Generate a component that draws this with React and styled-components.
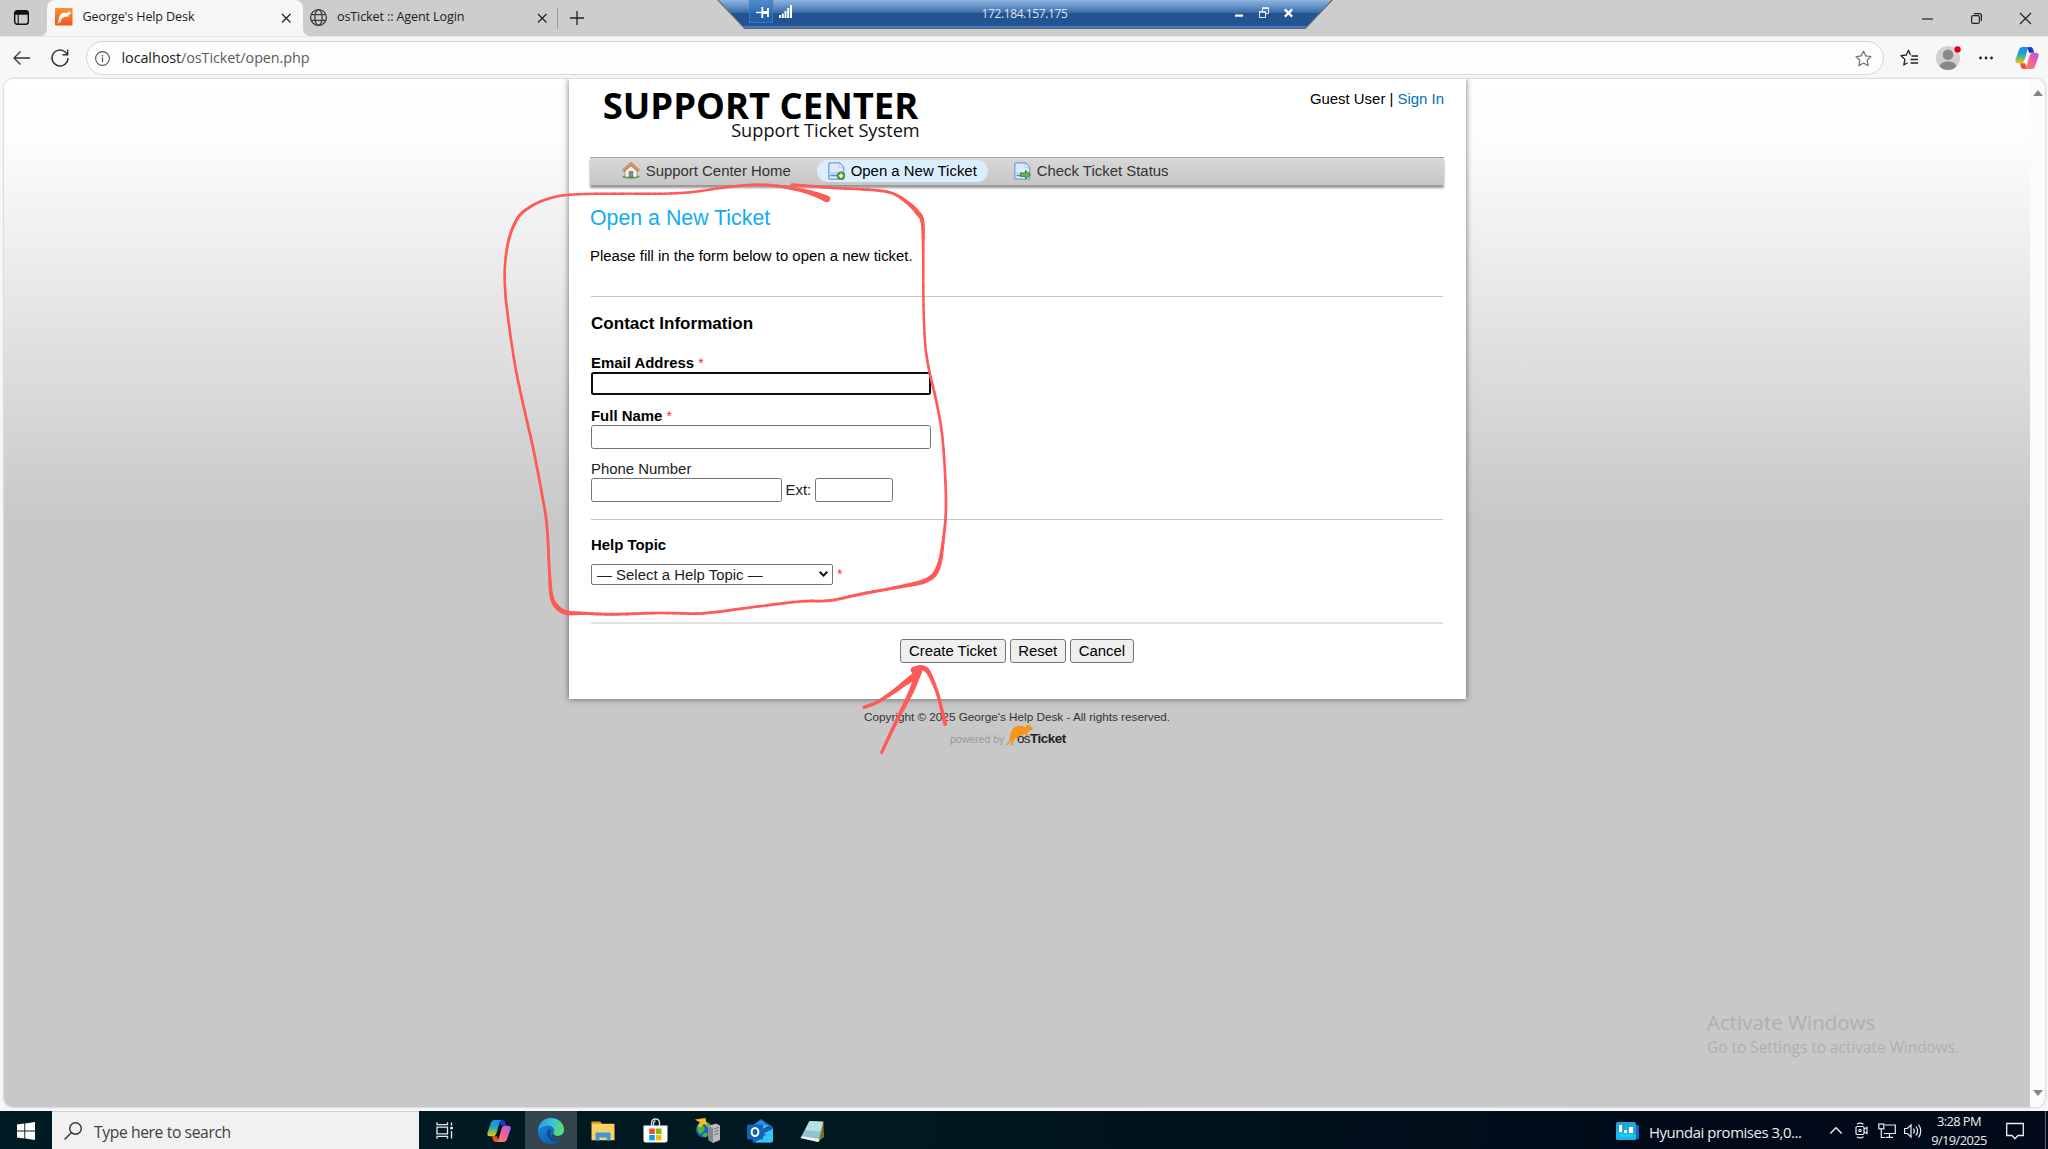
import React from "react";
import styled, { createGlobalStyle } from "styled-components";

const Global = createGlobalStyle`
  * { box-sizing: border-box; }
  html, body { margin: 0; padding: 0; }
  body { width: 2048px; height: 1149px; overflow: hidden; background: #f7f7f7; }
`;

const ui = `"Open Sans", "Noto Sans", sans-serif`;
const arial = `"Liberation Sans", Arial, sans-serif`;

const Screen = styled.div`
  position: relative;
  width: 2048px;
  height: 1149px;
  display: flex;
  flex-direction: column;
  overflow: hidden;
  background: #f7f7f7;
  font-family: ${ui};
`;

const Icon = styled.svg`
  display: block;
  flex: none;
  overflow: visible;
  width: ${(p) => p.$w}px;
  height: ${(p) => p.$h || p.$w}px;
  margin-left: ${(p) => p.$ml || 0}px;
  margin-top: ${(p) => p.$mt || 0}px;
`;

/* ---------- browser chrome ---------- */
const TabStrip = styled.div`
  display: flex;
  height: 36px;
  flex: none;
  color: #1b1b1b;
`;
const StripStart = styled.div`
  width: 47px;
  background: #cdcdcd;
  border-bottom-right-radius: 7px;
  padding: 10px 0 0 14px;
`;
const ActiveTabSlot = styled.div`
  width: 256px;
  background: linear-gradient(#cdcdcd 50%, #f7f7f7 50%);
`;
const ActiveTab = styled.div`
  height: 36px;
  display: flex;
  align-items: center;
  padding-left: 7.5px;
  background: #f7f7f7;
  border-radius: 8px 8px 0 0;
`;
const StripRest = styled.div`
  flex: 1;
  display: flex;
  align-items: center;
  background: #cdcdcd;
  border-bottom-left-radius: 7px;
  padding: 0 17px 0 6.5px;
`;
const TabTitle = styled.div`
  width: ${(p) => p.$w}px;
  margin-left: 10.5px;
  font-size: 12.6px;
  line-height: 18px;
  margin-top: -1.5px;
  letter-spacing: -0.13px;
  white-space: nowrap;
`;
const Separator = styled.div`
  width: 1px;
  height: 21px;
  margin-left: 10.5px;
  background: #999;
`;
const Spacer = styled.div`
  flex: 1;
`;

const Toolbar = styled.div`
  display: flex;
  align-items: center;
  flex: none;
  height: 43px;
  padding-left: 12.5px;
  border-top: 1px solid #e6e6e6;
`;
const AddressBar = styled.div`
  display: flex;
  align-items: center;
  width: 1798px;
  height: 34px;
  margin-left: 17px;
  padding: 0 11px 0 8.5px;
  background: #fdfdfd;
  border: 1px solid #d6d6d6;
  border-radius: 17px;
`;
const Url = styled.div`
  flex: 1;
  margin-left: 11.5px;
  font-size: 14.4px;
  line-height: 20px;
  letter-spacing: -0.08px;
  color: #5c5c5c;
  b { font-weight: 400; color: #1b1b1b; }
`;

const Viewport = styled.div`
  display: flex;
  flex: none;
  height: 1028px;
  margin: 0 3px 0 4px;
  border-radius: 9px;
  overflow: hidden;
  box-shadow: 0 0 2px 1px rgba(0, 0, 0, 0.13);
`;
const Scrollbar = styled.div`
  display: flex;
  flex-direction: column;
  justify-content: space-between;
  align-items: center;
  width: 15px;
  padding: 11px 0;
  background: #fbfbfb;
`;

/* ---------- page ---------- */
const Page = styled.div`
  flex: 1;
  display: flex;
  flex-direction: column;
  align-items: center;
  background: linear-gradient(#ffffff 0px, #fdfdfd 60px, #c8c8c8 440px);
  font-family: ${arial};
  font-size: 14.93px;
  color: #000;
`;
const Container = styled.main`
  width: 897px;
  height: 620.3px;
  padding: 0 21.5px;
  background: #fff;
  box-shadow: 0 0 6px rgba(0, 0, 0, 0.55);
`;
const Header = styled.header`
  display: flex;
  justify-content: space-between;
  height: 78px;
`;
const Logo = styled.div`
  width: 329.7px;
  padding: 11px 0 0 12.8px;
  font-family: ${ui};
  white-space: nowrap;
`;
const LogoTitle = styled.div`
  font-size: 36.4px;
  font-weight: 700;
  line-height: 30px;
`;
const LogoSubtitle = styled.div`
  margin-top: 0.8px;
  text-align: right;
  font-size: 18.2px;
  line-height: 19px;
  color: #111;
`;
const UserLinks = styled.div`
  padding-top: 10px;
  line-height: 20px;
  a { color: #0072bc; text-decoration: none; }
`;
const Nav = styled.nav`
  display: flex;
  align-items: flex-start;
  height: 28px;
  padding: 2px 0 0 20.5px;
  border-top: 1px solid #a3a3a3;
  background: linear-gradient(#d8d8d8, #c6c6c6);
  box-shadow: 0 3px 2px rgba(0, 0, 0, 0.4);
`;
const NavItem = styled.div`
  display: flex;
  align-items: center;
  height: 21.5px;
  margin-right: 14.5px;
  padding: 0 11.2px;
  border-radius: 11px;
  line-height: 21px;
  white-space: nowrap;
  gap: 6px;
  color: ${(p) => (p.$active ? "#000" : "#333")};
  background: ${(p) => (p.$active ? "#dbeefe" : "transparent")};
`;
const Heading = styled.h1`
  margin: 19px 0 0;
  font-size: 21.33px;
  font-weight: 400;
  line-height: 28px;
  color: #10acf0;
`;
const Intro = styled.p`
  margin: 13.5px 0 0;
  line-height: 20px;
`;
const Rule = styled.div`
  height: ${(p) => (p.$soft ? 2 : 1)}px;
  margin: ${(p) => p.$top}px 1px 0;
  background: ${(p) => (p.$soft ? "#e1e1e1" : "#c6c6c6")};
`;
const SectionTitle = styled.h3`
  margin: 15.7px 1px 0;
  font-size: 17.07px;
  line-height: 22px;
`;
const Label = styled.label`
  display: block;
  height: 20px;
  margin: ${(p) => p.$top}px 0 0 1px;
  line-height: 21px;
  font-weight: ${(p) => (p.$required ? 700 : 400)};
  color: ${(p) => (p.$required ? "#000" : "#222")};
`;
const Star = styled.span`
  color: #ff2a2a;
  font-weight: 400;
  font-size: 14px;
`;
const Row = styled.div`
  display: flex;
  align-items: center;
  margin-top: ${(p) => p.$top || 0}px;
  margin-left: 1px;
  color: #222;
  white-space: nowrap;
`;
const Field = styled.div`
  width: ${(p) => p.$w}px;
  height: 23.5px;
  border: ${(p) => (p.$focus ? "2px solid #101010" : "1px solid #767676")};
  border-radius: 2.5px;
  background: #fff;
`;
const Ext = styled.span`
  width: 33.5px;
  padding-left: 4px;
  margin-top: -1px;
`;
const SelectBox = styled.div`
  display: flex;
  align-items: center;
  justify-content: space-between;
  width: 242px;
  height: 21px;
  margin-right: 4px;
  padding: 0 4px 0 5px;
  border: 1px solid #767676;
  border-radius: 2px;
`;
const Actions = styled.div`
  display: flex;
  justify-content: center;
  gap: 4.3px;
  margin-top: 15.4px;
`;
const Button = styled.div`
  width: ${(p) => p.$w}px;
  height: 23.5px;
  border: 1px solid #767676;
  border-radius: 3px;
  background: #efefef;
  text-align: center;
  line-height: 22px;
`;
const Copyright = styled.div`
  margin-top: 9.5px;
  font-size: 11.73px;
  line-height: 16px;
  color: #333;
`;
const Powered = styled.div`
  display: flex;
  align-items: flex-end;
  width: 117px;
  height: 22px;
  margin-top: -0.5px;
  margin-right: 17px;
  color: #999;
  font-size: 10.5px;
  line-height: 14px;
  white-space: nowrap;
`;
const PoweredText = styled.div`
  width: 55px;
`;
const Brand = styled.div`
  margin-left: -16px;
  font-size: 13.4px;
  line-height: 14px;
  letter-spacing: -0.6px;
  color: #222;
  z-index: 1;
  b { letter-spacing: -0.45px; }
`;

/* ---------- overlays ---------- */
const RemoteBar = styled.div`
  position: absolute;
  top: 0;
  left: 717px;
  width: 616px;
  height: 29px;
  background: #5d6670;
  clip-path: polygon(0 0, 100% 0, calc(100% - 27.5px) 100%, 27.5px 100%);
`;
const RemoteFace = styled.div`
  position: relative;
  display: flex;
  align-items: center;
  height: 28px;
  padding: 0 40px 2px 32px;
  clip-path: polygon(1.5px 0, calc(100% - 1.5px) 0, calc(100% - 28px) 100%, 28px 100%);
  background: linear-gradient(#8fb3dc 0, #5f8fc6 7px, #3e6ba5 12.5px, #235390 13px, #235390 26px, #4a7bb8 26px, #4a7bb8 28px);
`;
const PinBox = styled.div`
  display: flex;
  align-items: center;
  justify-content: center;
  width: 24px;
  height: 23px;
  margin-top: -3px;
  padding: 3px 0 0 2px;
  background: rgba(37, 110, 190, 0.55);
  border: 1px solid #2f7fcb;
  border-top: 0;
`;
const Address = styled.div`
  flex: 1;
  padding: 2px 0 0 22px;
  text-align: center;
  font-size: 12px;
  line-height: 18px;
  letter-spacing: -0.4px;
  color: #dbe6f3;
`;
const Watermark = styled.div`
  position: absolute;
  left: 1707px;
  top: 1008px;
  color: #afafaf;
  font-size: 15.4px;
  line-height: 24px;
  white-space: nowrap;
  div:first-child { font-size: 20.5px; line-height: 28px; }
`;
const Ink = styled.svg`
  position: absolute;
  left: 0;
  top: 0;
  width: 2048px;
  height: 1149px;
  pointer-events: none;
`;

/* ---------- taskbar ---------- */
const Taskbar = styled.div`
  display: flex;
  height: 38.5px;
  margin-top: 3.5px;
  background: linear-gradient(90deg, #001b24 0, #001820 45%, #000a18 80%);
  color: #eee;
`;
const Slot = styled.div`
  display: flex;
  align-items: center;
  justify-content: center;
  width: ${(p) => p.$w || 52.2}px;
  background: ${(p) => (p.$active ? "#33464f" : "transparent")};
  padding-top: 2px;
`;
const Search = styled.div`
  display: flex;
  align-items: center;
  width: 367px;
  padding-left: 12px;
  background: #f1f1f1;
  border-top: 1px solid #cfd2d3;
  color: #3f3f3f;
  font-size: 15.7px;
  letter-spacing: -0.4px;
`;
const SearchText = styled.span`
  margin-left: 12px;
  padding-top: 4px;
`;
const News = styled.div`
  width: 180px;
  margin-left: 10px;
  font-size: 14.9px;
  line-height: 38px;
  padding-top: 2px;
  letter-spacing: -0.43px;
  white-space: nowrap;
`;
const Clock = styled.div`
  width: 64px;
  padding-top: 1.3px;
  margin-left: 5px;
  text-align: center;
  font-size: 12.9px;
  line-height: 19.6px;
  letter-spacing: -0.6px;
`;
const ShowDesktop = styled.div`
  width: 3px;
  margin-left: 21px;
  border-left: 1px solid #5b6570;
`;

const Close = ({ ml, size = 8.5, color = "#222" }) => (
  <Icon $w={size} $ml={ml} viewBox="0 0 9 9" fill="none" stroke={color} strokeWidth="1.3">
    <path d="M0 0L9 9M9 0L0 9" />
  </Icon>
);

const Copilot = ({ id, w, ml }) => (
  <Icon $w={w} $h={w * 0.92} $ml={ml} viewBox="0 0 24 22">
    <defs>
      <linearGradient id={id + "a"} x1="0" y1="0" x2="0" y2="1">
        <stop offset="0" stopColor="#1c8cf0" />
        <stop offset=".45" stopColor="#20a5c8" />
        <stop offset=".75" stopColor="#8bc04a" />
        <stop offset="1" stopColor="#f4c20d" />
      </linearGradient>
      <linearGradient id={id + "b"} x1="1" y1="0" x2="0" y2="1">
        <stop offset="0" stopColor="#b05cf0" />
        <stop offset=".5" stopColor="#f0609a" />
        <stop offset="1" stopColor="#ff8a4c" />
      </linearGradient>
    </defs>
    <path d="M12 0h3.6c1.500 0 2.200 1 2.600 2.500l.9 3.200h-5z" fill="#1540c0" />
    <path d="M12 22H8.400c-1.500 0-2.200-1-2.600-2.500L5 16.200h5z" fill="#ee4a34" />
    <path d="M15 0H7.500C5.300 0 4.400 1.300 3.700 3.500L.8 11.800C-.3 15 .8 16.300 3 16.300h3c2 0 2.900-1.300 3.600-3.500l2.600-9C12.900 1.500 13.400.2 15 0z" fill={`url(#${id}a)`} />
    <path d="M9 22h7.500c2.200 0 3.100-1.300 3.800-3.500l2.900-8.300C24.300 7 23.200 5.700 21 5.700h-3c-2 0-2.900 1.300-3.600 3.500l-2.600 9C11.100 20.500 10.600 21.800 9 22z" fill={`url(#${id}b)`} />
  </Icon>
);

const DocIcon = ({ children }) => (
  <Icon $w="17" $h="18" viewBox="0 0 17 18">
    <path d="M2 .8h9.500L15.600 5v11q0 1.200-1.200 1.200H2Q.8 17.200.8 16V2Q.8.800 2 .8z" fill="#dceafa" stroke="#6d9fdc" strokeWidth="1.300" />
    <path d="M11.200 1v4.200h4.300z" fill="#fff" stroke="#8fb5e6" strokeWidth=".7" />
    <path d="M2 10h13v3H2z" fill="#b9d6f5" />
    <path d="M2.500 13.600h8" stroke="#3f8fe8" strokeWidth="1.200" />
    {children}
  </Icon>
);

/* Freehand marker: each point is x, y, pen width. */
const loop = [
  [827, 199, 6.5], [816, 194.500, 5], [800, 190, 3.600], [777, 186, 2.600], [753, 184.700, 2.400], [723, 187.700, 2.200],
  [690, 192.300, 2.200], [660, 193.700, 2.200], [623, 193.700, 2.200], [570, 194.700, 2.300], [543, 200.500, 2.400],
  [523, 212, 2.700], [514, 225, 2.700], [508, 243, 2.500], [505, 265, 2.300], [505, 287, 2.300], [507.300, 312, 2.400],
  [515, 365, 2.400], [524, 408, 2.500], [533.500, 450, 2.500], [542.500, 497, 2.500], [547, 527, 2.500], [549.500, 573, 2.700],
  [551.500, 596, 3.500], [557, 607, 4.500], [567, 612.700, 4.500], [585, 613.300, 3], [612, 614.300, 2.700], [660, 613, 2.500],
  [703, 613.300, 2.500], [750, 607.500, 2.500], [800, 601.500, 2.500], [830, 600.500, 2.600], [860, 594.300, 2.800],
  [900, 586.700, 3], [926, 580.500, 4.500], [938, 568, 4.500], [943.700, 537, 2.700], [946, 500, 2.400], [942.700, 440, 2.400],
  [936.700, 403, 2.400], [929.500, 372, 2.400], [925.300, 345, 2.300], [923.500, 305, 2.300], [923.200, 250, 2.400],
  [922.500, 222, 3.500], [917, 212, 4.500], [908, 203, 3.500], [893, 193.500, 2.600], [873, 190, 2.500], [840, 188.300, 2.400],
  [815, 186.500, 2.600], [792, 184.700, 2.800],
];
const arrowHead = [
  [864, 707.300, 3], [877, 702.300, 3], [893, 692, 3.800], [905, 683, 5], [916, 675, 7], [918, 670, 7], [913.500, 670, 5],
  [920, 667.700, 4.500], [926, 669.500, 4.500], [930.500, 676, 4], [937, 692, 3], [941, 707, 3], [945.300, 724, 3.800],
];
const arrowShaft = [[918, 674, 6], [911, 692, 5], [898, 718, 3.500], [881.700, 752.300, 3]];

function strokeSegments(points, steps = 6) {
  const out = [];
  let prev = points[0];
  for (let i = 0; i < points.length - 1; i++) {
    const a = points[Math.max(i - 1, 0)];
    const b = points[i];
    const c = points[i + 1];
    const d = points[Math.min(i + 2, points.length - 1)];
    for (let s = 1; s <= steps; s++) {
      const t = s / steps;
      const at = (k) =>
        0.5 * (2 * b[k] + (c[k] - a[k]) * t + (2 * a[k] - 5 * b[k] + 4 * c[k] - d[k]) * t * t + (3 * b[k] - a[k] - 3 * c[k] + d[k]) * t * t * t);
      const next = [at(0), at(1), b[2] + (c[2] - b[2]) * t];
      out.push([prev, next]);
      prev = next;
    }
  }
  return out;
}

const Marker = ({ points }) =>
  strokeSegments(points).map(([p, q], i) => (
    <line key={i} x1={p[0]} y1={p[1]} x2={q[0]} y2={q[1]} strokeWidth={q[2] + 0.2} />
  ));

const Kangaroo = () => (
  <Icon $w="28" $h="22" viewBox="0 0 84 66">
    <path d="M2 62C11 62 14 54 17 42" fill="none" stroke="#f7941d" strokeWidth="4" />
    <path
      d="M14 46C16 26 22 9 38 6 48 4 56 8 62 9 65 8 66 6 65 1L70 4 74 0 76 6C79 8 83 12 84 15 83 19 76 19 72 20 70 24 68 27 66 28L72 37 68 39 60 30C56 32 52 34 46 36 40 37 36 41 31 44 27 47 25 51 24 57L27 64 18 64 19 50z"
      fill="#f7941d"
    />
  </Icon>
);

export default function App() {
  return (
    <Screen>
      <Global />
      <TabStrip>
        <StripStart>
          <Icon $w="15" viewBox="0 0 15 15">
            <rect x=".7" y=".7" width="13.600" height="13.600" rx="2.500" fill="none" stroke="#111" strokeWidth="1.400" />
            <path d="M.7 4.800V3Q.7.700 3 .7h9q2.300 0 2.300 2.300v1.800z" fill="#111" />
            <path d="M4.200 4v10" stroke="#111" strokeWidth="1.100" />
          </Icon>
        </StripStart>
        <ActiveTabSlot>
          <ActiveTab>
            <Icon $w="17.500" $mt="-2" viewBox="0 0 18 18">
              <defs>
                <linearGradient id="fav" x1="0" y1="0" x2="0" y2="1">
                  <stop offset="0" stopColor="#f9962c" />
                  <stop offset="1" stopColor="#f0541e" />
                </linearGradient>
              </defs>
              <rect width="18" height="18" rx="1" fill="url(#fav)" />
              <path d="M2 16c1.800-1.200 1.600-4 2.200-6.300C5 6.500 7.200 4.700 9.500 4.900l3.600-.1L14 3.200l1.200 1.100 1.800 1-2.400 1.300-1 1.600.8 1.600-1.800-1.200L9.500 9.500 7.300 10.800 6 12.500 6.200 15.500 4.600 14 3.500 15.600z" fill="#fff" />
            </Icon>
            <TabTitle $w="198.500">George's Help Desk</TabTitle>
            <Close ml={1} />
          </ActiveTab>
        </ActiveTabSlot>
        <StripRest>
          <Icon $w="17" $mt="-1" viewBox="0 0 17 17" fill="none" stroke="#3a3a3a" strokeWidth="1.300">
            <circle cx="8.500" cy="8.500" r="7.900" />
            <ellipse cx="8.500" cy="8.500" rx="3.700" ry="7.900" />
            <path d="M1.200 5.700h14.600M1.200 11.300h14.600" />
          </Icon>
          <TabTitle $w="199.500">osTicket :: Agent Login</TabTitle>
          <Close ml={1.5} />
          <Separator />
          <Icon $w="14" $ml="11.500" $mt="-1" viewBox="0 0 14 14" stroke="#222" strokeWidth="1.300">
            <path d="M7 0v14M0 7h14" />
          </Icon>
          <Spacer />
          <Icon $w="11" viewBox="0 0 11 11" stroke="#222" strokeWidth="1.200">
            <path d="M0 6h11" />
          </Icon>
          <Icon $w="11" $ml="38" viewBox="0 0 11 11" fill="none" stroke="#222" strokeWidth="1.200">
            <rect x=".6" y="2.600" width="7.800" height="7.800" rx="1.500" />
            <path d="M3 .6h5.500Q10.400.600 10.400 2.500V8" />
          </Icon>
          <Icon $w="11" $ml="38" viewBox="0 0 11 11" stroke="#222" strokeWidth="1.200">
            <path d="M0 0l11 11M11 0L0 11" />
          </Icon>
        </StripRest>
      </TabStrip>

      <Toolbar>
        <Icon $w="17" $h="14" viewBox="0 0 17 14" fill="none" stroke="#333" strokeWidth="1.300">
          <path d="M17 7H1M7.500.500L1 7l6.500 6.500" />
        </Icon>
        <Icon $w="18" $ml="21" viewBox="0 0 18 18" fill="none" stroke="#333" strokeWidth="1.400">
          <path d="M17 9A8 8 0 1 1 14.700 3.400L16.500 5.500M16.700.500v5.200h-5.200" />
        </Icon>
        <AddressBar>
          <Icon $w="15" viewBox="0 0 15 15" fill="none" stroke="#555" strokeWidth="1.100">
            <circle cx="7.500" cy="7.500" r="6.900" />
            <path d="M7.500 6.500v4.500M7.500 4v1.400" strokeWidth="1.300" />
          </Icon>
          <Url><b>localhost</b>/osTicket/open.php</Url>
          <Icon $w="17" viewBox="0 0 24 24" fill="none" stroke="#777" strokeWidth="1.800" strokeLinejoin="round">
            <path d="M12 1.500l3.200 6.800 7.300 1-5.300 5.200 1.300 7.500L12 18.300 5.500 22l1.300-7.500L1.500 9.300l7.300-1z" />
          </Icon>
        </AddressBar>
        <Icon $w="18" $ml="16" viewBox="0 0 18 18" fill="none" stroke="#222" strokeWidth="1.300" strokeLinejoin="round">
          <path d="M10.500 5.900L8.500 1.200 6.300 6 1 6.700l3.900 3.700L3.800 16l3.800-2.200M11.500 7H18M10.500 10.500H18M10.500 14H18" />
        </Icon>
        <Icon $w="24" $ml="18.500" viewBox="0 0 24 24">
          <circle cx="12" cy="12" r="12" fill="#d2d0ce" />
          <circle cx="12" cy="8.700" r="5.300" fill="#8a8886" />
          <path d="M3.500 20.500C5 16.500 8 15.500 12 15.500s7 1 8.500 5A12 12 0 0 1 3.500 20.500z" fill="#8a8886" />
          <circle cx="21.500" cy="3.500" r="3.800" fill="#f7f7f7" />
          <circle cx="21.500" cy="3.500" r="3.200" fill="#e3000f" />
        </Icon>
        <Icon $w="14" $h="4" $ml="19" viewBox="0 0 14 4" fill="#222">
          <circle cx="1.500" cy="2" r="1.400" />
          <circle cx="7" cy="2" r="1.400" />
          <circle cx="12.500" cy="2" r="1.400" />
        </Icon>
        <Copilot id="cpTop" w={24} ml={22} />
      </Toolbar>

      <Viewport>
        <Page>
          <Container>
            <Header>
              <Logo>
                <LogoTitle>SUPPORT CENTER</LogoTitle>
                <LogoSubtitle>Support Ticket System</LogoSubtitle>
              </Logo>
              <UserLinks>
                Guest User | <a>Sign In</a>
              </UserLinks>
            </Header>
            <Nav>
              <NavItem>
                <Icon $w="18" $h="17" viewBox="0 0 18 17">
                  <ellipse cx="9" cy="14.800" rx="8.500" ry="1.700" fill="#3f9e4a" />
                  <path d="M3 8l6-5.500L15 8v7H3z" fill="#f4f1ec" stroke="#8c8c8c" strokeWidth=".6" />
                  <path d="M7.200 9.500h3.600V15H7.200z" fill="#8a8f95" stroke="#555" strokeWidth=".6" />
                  <path d="M1.200 8.800L9 2l7.800 6.800" fill="none" stroke="#a8662c" strokeWidth="3" />
                  <path d="M1.200 8.600L9 1.800l7.800 6.800" fill="none" stroke="#e0a365" strokeWidth="1.600" />
                </Icon>
                Support Center Home
              </NavItem>
              <NavItem $active>
                <DocIcon>
                  <circle cx="13" cy="13.700" r="3.900" fill="#5b9a3a" stroke="#3d7a22" strokeWidth=".6" />
                  <path d="M13 11.500v4.400M10.800 13.700h4.400" stroke="#fff" strokeWidth="1.500" />
                </DocIcon>
                Open a New Ticket
              </NavItem>
              <NavItem>
                <DocIcon>
                  <path d="M6.500 11h5V8.500l5 4.200-5 4.200v-2.500h-5z" fill="#6fb24c" stroke="#3c8426" strokeWidth=".9" />
                </DocIcon>
                Check Ticket Status
              </NavItem>
            </Nav>

            <Heading>Open a New Ticket</Heading>
            <Intro>Please fill in the form below to open a new ticket.</Intro>
            <Rule $top={30.5} />
            <SectionTitle>Contact Information</SectionTitle>
            <Label $top={16.9} $required>Email Address <Star>*</Star></Label>
            <Row><Field $w={340} $focus /></Row>
            <Label $top={10.4} $required>Full Name <Star>*</Star></Label>
            <Row><Field $w={340} /></Row>
            <Label $top={9.5}>Phone Number</Label>
            <Row>
              <Field $w={190.5} />
              <Ext>Ext:</Ext>
              <Field $w={78} />
            </Row>
            <Rule $top={16.9} />
            <Label $top={14.6} $required>Help Topic</Label>
            <Row $top={9.2}>
              <SelectBox>
                — Select a Help Topic —
                <Icon $w="9" $h="6" viewBox="0 0 9 6" fill="none" stroke="#111" strokeWidth="2">
                  <path d="M.7.800l3.800 3.800L8.300.8" />
                </Icon>
              </SelectBox>
              <Star>*</Star>
            </Row>
            <Rule $top={37.2} $soft />
            <Actions>
              <Button $w={105.5}>Create Ticket</Button>
              <Button $w={55.7}>Reset</Button>
              <Button $w={64}>Cancel</Button>
            </Actions>
          </Container>
          <Copyright>Copyright © 2025 George's Help Desk - All rights reserved.</Copyright>
          <Powered>
            <PoweredText>powered by</PoweredText>
            <Kangaroo />
            <Brand>os<b>Ticket</b></Brand>
          </Powered>
        </Page>
        <Scrollbar>
          <Icon $w="10" $h="6" viewBox="0 0 10 6" fill="#858585"><path d="M5 0l5 6H0z" /></Icon>
          <Icon $w="10" $h="6" viewBox="0 0 10 6" fill="#858585"><path d="M5 6l5-6H0z" /></Icon>
        </Scrollbar>
      </Viewport>

      <Taskbar>
        <Slot $w={52}>
          <Icon $w="18" viewBox="0 0 18 18" fill="#fff">
            <path d="M0 2.600L7.300 1.600V8.600H0zM8.200 1.500L18 0v8.600H8.200zM0 9.500h7.300v7L0 15.500zM8.200 9.500H18V18l-9.800-1.400z" />
          </Icon>
        </Slot>
        <Search>
          <Icon $w="18" $mt="2" viewBox="0 0 18 18" fill="none" stroke="#333" strokeWidth="1.400">
            <circle cx="11.500" cy="6.500" r="5.800" />
            <path d="M7.300 10.700L.5 17.500" />
          </Icon>
          <SearchText>Type here to search</SearchText>
        </Search>
        <Slot $w={54}>
          <Icon $w="17" $ml="-4" viewBox="0 0 17 17" fill="none" stroke="#e8e8e8" strokeWidth="1.300">
            <path d="M1 .3v2.400h10.500V.3M1 16.700v-2.400h10.500v2.400M1 5.200h10.500v6.600H1zM15.500.5v3M15.500 9v7.500" />
            <rect x="14.300" y="4.800" width="2.500" height="2.500" fill="#fff" stroke="none" />
          </Icon>
        </Slot>
        <Slot><Copilot id="cpBar" w={24} /></Slot>
        <Slot $active>
          <Icon $w="26" viewBox="0 0 26 26">
            <defs>
              <linearGradient id="edgeTop" x1="0" y1=".3" x2="1" y2=".5">
                <stop offset="0" stopColor="#2a9fe0" />
                <stop offset=".5" stopColor="#35c1d8" />
                <stop offset="1" stopColor="#5fe06a" />
              </linearGradient>
              <linearGradient id="edgeLow" x1="0" y1="0" x2="1" y2="1">
                <stop offset="0" stopColor="#1b8ee0" />
                <stop offset="1" stopColor="#0c4f9e" />
              </linearGradient>
            </defs>
            <circle cx="13" cy="13" r="13" fill="url(#edgeLow)" />
            <path d="M.5 10C2 4 7 0 13 0c7.500 0 13 5.500 13 11.500 0 4-3 6.500-6.500 6.500-3 0-4.500-1-4.500-2 0-.8 1.200-1.500 1.200-3.500C16.200 9.500 13 7.500 9.500 7.500 5 7.500 1.500 10 0 13z" fill="url(#edgeTop)" />
            <path d="M10 11.500c-2 4-.5 9.500 5 11.500 3 1 6.500.3 8.700-2-3 1.500-7.200 1-9.700-1.500-2-2-2.500-5-.8-7.500-1-.8-2.300-.9-3.200-.5z" fill="#0b4794" />
            <path d="M15.500 15.500c0 1.500 2 2.500 4.500 2.500 2 0 4-.8 6.300-3-.3 3-2 5-3.500 6.200-3 1-6.300.4-8-1.700-1.200-1.500-1-3 .7-4z" fill="#33464f" />
          </Icon>
        </Slot>
        <Slot>
          <Icon $w="24" $h="20" viewBox="0 0 24 20">
            <path d="M.5 1.200Q.5.500 1.200.5h8l2 2.500H.5z" fill="#d99b1c" />
            <path d="M.5 2.700h22.300q.7 0 .7.700v15.800H.5z" fill="#fbd065" />
            <path d="M4.500 19.500v-6.800q0-1.200 1.200-1.200h12.600q1.200 0 1.200 1.200v6.800h-3.800v-3H8.300v3z" fill="#3f95dd" />
          </Icon>
        </Slot>
        <Slot>
          <Icon $w="25" viewBox="0 0 25 25">
            <path d="M8.500 8V5Q8.500 1 12.500 1t4 4v3M10.500 8V5.500Q10.500 3 12.500 3" fill="none" stroke="#ddd" strokeWidth="1.300" />
            <path d="M.5 7.500h24V22q0 2.500-2.500 2.500H3Q.500 24.500.500 22z" fill="#fff" />
            <path d="M6.300 10.500h5.500V16H6.300z" fill="#f25022" />
            <path d="M13 10.500h5.500V16H13z" fill="#7fba00" />
            <path d="M6.300 17h5.500v5.300H6.300z" fill="#00a4ef" />
            <path d="M13 17h5.500v5.300H13z" fill="#ffb900" />
          </Icon>
        </Slot>
        <Slot>
          <Icon $w="25" viewBox="0 0 25 25">
            <circle cx="9" cy="11.500" r="8" fill="#2456c4" />
            <path d="M2 9q3-3 6-1t1 5-4 3q-3-3-3-7zM10 4q5 0 6.500 5l-4 1.500zM7 17l4-3 2 3-3 2.500z" fill="#48b83a" />
            <path d="M0 1.500L10.500 0 12 8 9 6 5.500 9.500l-3-1.300L5 4.500z" fill="#f2bd26" />
            <path d="M13.500 8L21 5.500l4 2V22l-7 3-4.500-3z" fill="#b9bcbe" />
            <path d="M13.500 8l4.500 2v15l-4.500-3z" fill="#86898c" />
            <path d="M19.300 11l4.500-1.800M19.300 14l4.500-1.800M19.300 17l4.500-1.800" stroke="#6e7174" />
          </Icon>
        </Slot>
        <Slot>
          <Icon $w="26" $h="24" viewBox="0 0 26 24">
            <path d="M3 8L14 0l12 8v13q0 2.500-2.500 2.500H6z" fill="#1a6cc8" />
            <path d="M7 6h16v9H7z" fill="#4fc3f7" />
            <path d="M7 6l7-5 5 4-8 8z" fill="#2b8fe6" />
            <path d="M26 9v12q0 2.500-2.500 2.500H8L20 15z" fill="#35c8f5" />
            <path d="M26 9L12 18l-4-3 14-9z" fill="#1560b5" />
            <rect y="5.500" width="16" height="15" rx="1.500" fill="#0f64b8" />
            <ellipse cx="8" cy="13" rx="3.400" ry="4" fill="none" stroke="#fff" strokeWidth="2" />
          </Icon>
        </Slot>
        <Slot>
          <Icon $w="24" viewBox="0 0 24 24">
            <path d="M9 2h14.500l.5 16-5 4z" fill="#8a6a30" />
            <path d="M9.500 2L23 3l-4.500 20L.5 19z" fill="#8ec5d0" />
            <path d="M9.500 2L23 3l-2.200 9.500L5 11z" fill="#b7dfe6" />
            <path d="M.5 19L18.500 23l1-3L2 17.300z" fill="#f2f4f5" />
          </Icon>
        </Slot>
        <Spacer />
        <Slot $w={24}>
          <Icon $w="23" $h="18" viewBox="0 0 23 18">
            <path d="M18 3h3.500Q23 3 23 4.500v11q0 2-2 2h-3z" fill="#1267c8" />
            <rect width="20" height="18" rx="2" fill="#25a5dc" />
            <path d="M0 9l20 3v4q0 2-2 2H2q-2 0-2-2z" fill="#1fb6e8" />
            <path d="M3 3h3v7H3zM8 8h3v3H8zM13 5h4v6h-4z" fill="#fff" />
            <path d="M3 12.500h14v2H3z" fill="#0fd8f5" />
          </Icon>
        </Slot>
        <News>Hyundai promises 3,0...</News>
        <Slot $w={14}>
          <Icon $w="12" $h="7" viewBox="0 0 12 7" fill="none" stroke="#eee" strokeWidth="1.400">
            <path d="M.3 6.500L6 .8l5.700 5.700" />
          </Icon>
        </Slot>
        <Slot $w={13}>
          <Icon $w="13" $h="17" $ml="24" viewBox="0 0 13 17" fill="none" stroke="#eee" strokeWidth="1.200">
            <rect x="1" y="4.500" width="8" height="8" rx="1.200" />
            <path d="M9 7l3-1.500v6L9 10M2 2.200Q5 0 8.500 2.200M2 14.800Q5 17 8.500 14.800" />
            <circle cx="5" cy="8.500" r="1.200" />
          </Icon>
        </Slot>
        <Slot $w={46}>
          <Icon $w="18" $h="16" $ml="16" viewBox="0 0 18 16" fill="none" stroke="#eee" strokeWidth="1.200">
            <path d="M6.500 2h10.800v8.500H6M11.500 10.500V14M8 14.400h7M3.300 6v8.500h4" />
            <rect x=".8" y="1" width="5" height="4.800" />
          </Icon>
        </Slot>
        <Slot $w={20}>
          <Icon $w="18" $h="16" $ml="1" viewBox="0 0 18 16" fill="none" stroke="#eee" strokeWidth="1.200">
            <path d="M.6 5.500h2.800L7 2v12l-3.600-3.500H.6zM9.500 5.500q1.800 2.500 0 5M12 3.500q3.200 4.500 0 9M14.500 1.500q4.500 6.500 0 13" />
          </Icon>
        </Slot>
        <Clock>
          3:28 PM
          <br />
          9/19/2025
        </Clock>
        <Slot $w={33}>
          <Icon $w="18" $ml="15" viewBox="0 0 18 18" fill="none" stroke="#eee" strokeWidth="1.300">
            <path d="M.7 1.500h16.600v12h-5.300L9 16.800l-3-3.300H.7z" />
          </Icon>
        </Slot>
        <ShowDesktop />
      </Taskbar>

      <RemoteBar>
        <RemoteFace>
          <PinBox>
            <Icon $w="13" $h="11" viewBox="0 0 13 11" stroke="#fff" fill="#fff">
              <path d="M0 5.500h5.500" strokeWidth="1.500" />
              <path d="M6.300 0v11M12 1v9" strokeWidth="1.800" />
              <path d="M6 5.500h6" strokeWidth="3" />
            </Icon>
          </PinBox>
          <Icon $w="13" $h="13" $ml="6" $mt="-3" viewBox="0 0 13 13" fill="#fff">
            <path d="M0 10h2v3H0zM2.800 8.500h2V13h-2zM5.500 6h2v7h-2zM8.200 3h2v10h-2zM11 0h2v13h-2z" />
          </Icon>
          <Address>172.184.157.175</Address>
          <Icon $w="8" $h="11" viewBox="0 0 8 11" fill="#fff"><path d="M0 6.500h8v2.200H0z" /></Icon>
          <Icon $w="10" $h="11" $ml="16" $mt="-2" viewBox="0 0 10 11" fill="none" stroke="#e8eef6" strokeWidth="1">
            <path d="M.5 4.500h6v6h-6zM.5 5.300h6M3.500 4V.600h6v6H7M3.500 1.500h6" />
          </Icon>
          <Icon $w="9" $h="8" $ml="15" $mt="-1" viewBox="0 0 9 8" stroke="#fff" strokeWidth="2.300">
            <path d="M.8.400l7.400 7.200M8.200.400L.8 7.600" />
          </Icon>
        </RemoteFace>
      </RemoteBar>

      <Watermark>
        <div>Activate Windows</div>
        <div>Go to Settings to activate Windows.</div>
      </Watermark>

      <Ink fill="none" stroke="#ff5a57" strokeLinecap="round">
        <Marker points={loop} />
        <Marker points={arrowHead} />
        <Marker points={arrowShaft} />
      </Ink>
    </Screen>
  );
}
